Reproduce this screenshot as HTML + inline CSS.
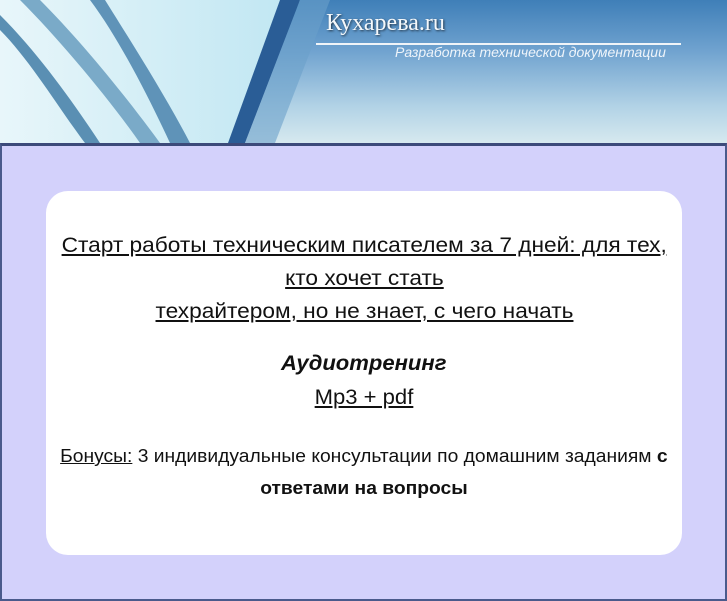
<!DOCTYPE html>
<html><head><meta charset="utf-8"><style>
body{margin:0;width:727px;height:600px;overflow:hidden;font-family:"Liberation Sans",sans-serif;}
.hdr{position:absolute;left:0;top:0;width:727px;height:143px;background:linear-gradient(180deg,#3f7fb8 0%,#6fa2cf 35%,#b3d3e6 75%,#d6e9ef 100%);overflow:hidden}
.main{position:absolute;left:0;top:143px;width:723px;height:453px;background:#d3d1fb;border:2px solid #4a5a8c;border-top:3px solid #3c4a7a}
.card{position:absolute;left:44px;top:45px;width:636px;height:364px;background:#fff;border-radius:22px;text-align:center;color:#111}
a{color:#111;text-decoration:underline}
.l{position:absolute;left:0;width:636px;text-align:center;white-space:nowrap}
.l span{display:inline-block}
</style></head><body>
<div class="hdr">
<svg width="727" height="143" style="position:absolute;left:0;top:0">
<defs><linearGradient id="g" x1="0" x2="1"><stop offset="0" stop-color="#e8f6fa"/><stop offset="1" stop-color="#bfe6f2"/></linearGradient></defs>
<polygon points="0,0 300,0 240,143 0,143" fill="url(#g)"/>
<path d="M0,30 C30,60 60,110 85,143 L100,143 C75,105 40,55 0,15Z" fill="#5a8fb3"/>
<path d="M20,0 C60,40 110,100 140,143 L160,143 C125,95 80,40 40,0Z" fill="#7aaac8"/>
<path d="M90,0 C120,40 150,100 170,143 L190,143 C165,95 130,40 105,0Z" fill="#5f93b8"/>
<path d="M280,0 L300,0 L245,143 L228,143Z" fill="#2a5d96"/>
<path d="M300,0 L330,0 L275,143 L245,143Z" fill="#6aa0c9" opacity=".6"/>
</svg>
<div style="position:absolute;left:326px;top:10px;font-family:'Liberation Serif',serif;font-size:24px;color:#f4f8fb;text-shadow:1px 1px 2px #234">Кухарева.ru</div>
<div style="position:absolute;left:316px;top:43px;width:365px;height:2px;background:#f0f4f8"></div>
<div style="position:absolute;left:395px;top:44px;font-size:14px;font-style:italic;color:#eef4fa">Разработка технической документации</div>
</div>
<div class="main"><div class="card">
<div class="l" style="top:43px;font-size:21px"><span style="transform:scaleX(1.08)"><a>Старт работы техническим писателем за 7 дней: для тех,</a></span></div>
<div class="l" style="top:76px;font-size:21px"><span style="transform:scaleX(1.08)"><a>кто хочет стать</a></span></div>
<div class="l" style="top:109px;font-size:21px"><span style="transform:scaleX(1.08)"><a>техрайтером, но не знает, с чего начать</a></span></div>
<div class="l" style="top:161px;font-size:21px;font-weight:bold;font-style:italic"><span style="transform:scaleX(1.05)">Аудиотренинг</span></div>
<div class="l" style="top:195px;font-size:21px"><span style="transform:scaleX(1.05)"><a>Mp3 + pdf</a></span></div>
<div class="l" style="top:255px;font-size:18px"><span style="transform:scaleX(1.07)"><a>Бонусы:</a> 3 индивидуальные консультации по домашним заданиям <b>с</b></span></div>
<div class="l" style="top:287px;font-size:18px;font-weight:bold"><span style="transform:scaleX(1.07)">ответами на вопросы</span></div>
</div></div>
</body></html>
